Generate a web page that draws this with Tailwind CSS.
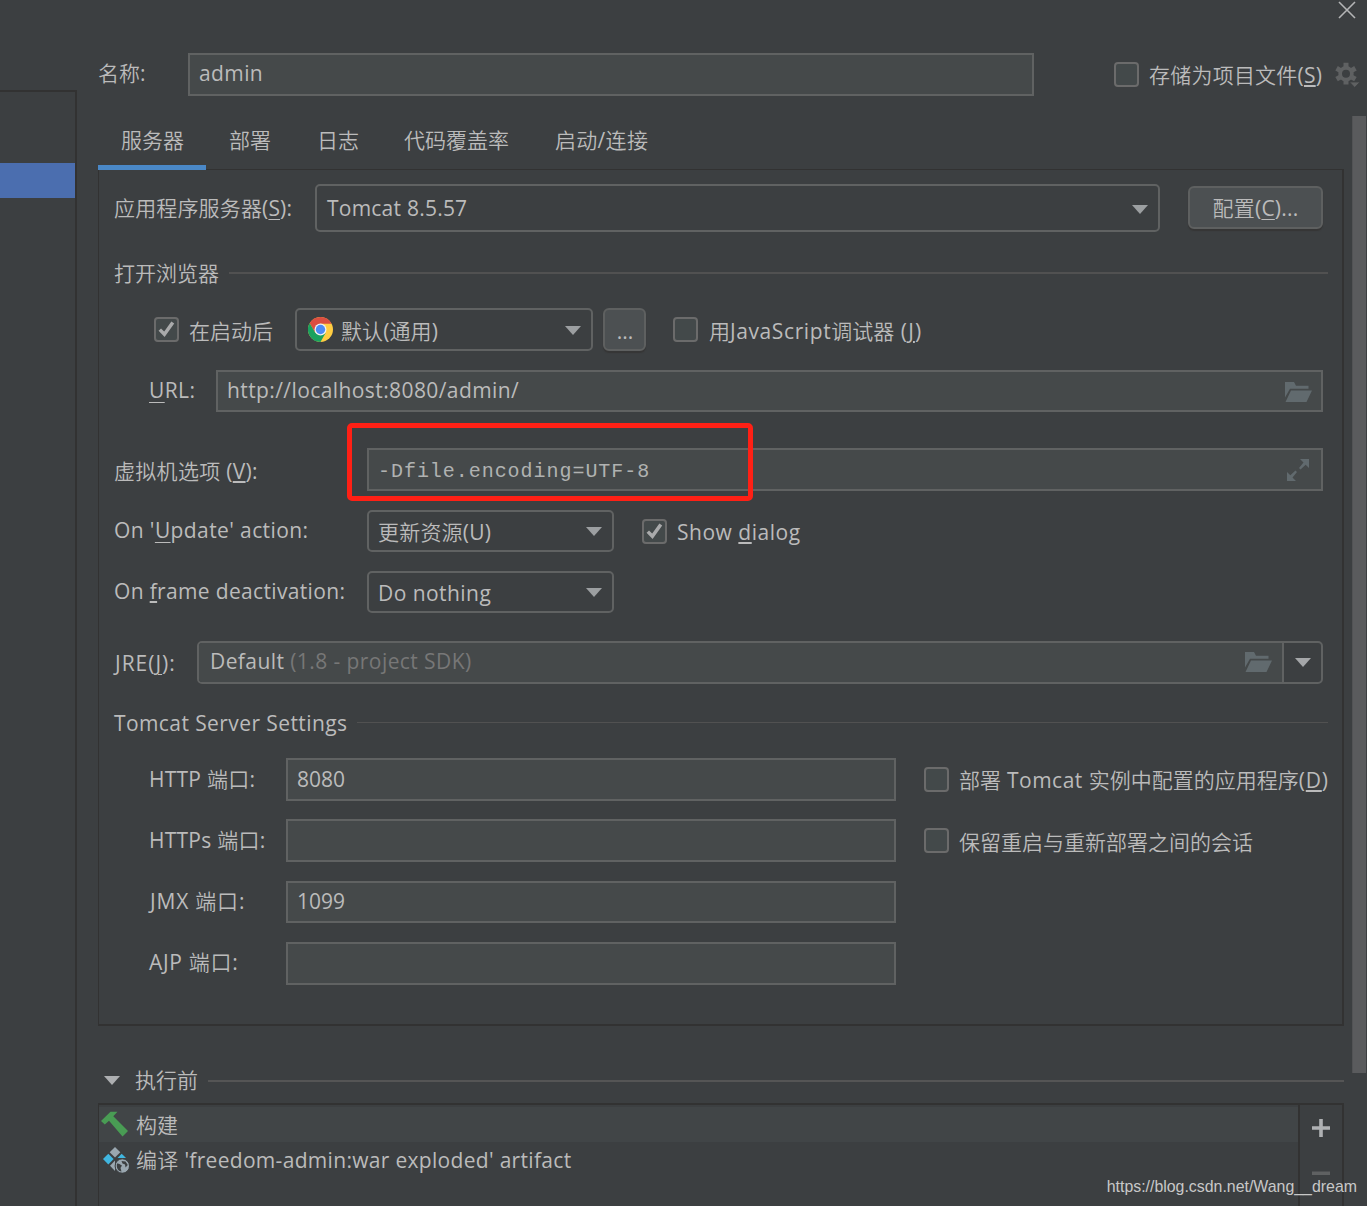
<!DOCTYPE html>
<html lang="zh-CN">
<head>
<meta charset="utf-8">
<title>Run/Debug Configurations</title>
<script src="https://cdn.jsdelivr.net/npm/@tailwindcss/browser@4"></script>
</head>
<body class="bg-[#3c3f41]">
<svg class="hidden">
  <symbol id="arrow" viewBox="0 0 16 9"><path d="M0 0H16L8 9Z" fill="currentColor"/></symbol>
  <symbol id="check" viewBox="0 0 25 25"><path d="M5.800 12.600L10.400 17.300L18.800 5.500" fill="none" stroke="#a9aaab" stroke-width="3.500"/></symbol>
  <symbol id="folder" viewBox="0 0 27 20"><path d="M0 0H9L11 3.700H23.500V6.700H5L0 15.500Z M6 8.600H27L21.500 20H.5Z" fill="#616a6e"/></symbol>
</svg>
<div class="relative flex h-[1206px] w-[1367px] overflow-hidden bg-[#3c3f41] font-['Open_Sans','Noto_Sans_CJK_SC_DemiLight','Noto_Sans_CJK_SC_Light','Noto_Sans_CJK_SC',sans-serif] text-[21px] leading-[28px] whitespace-nowrap text-[#bbbbbb]">

  <aside class="flex h-full w-[77px] shrink-0 flex-col pt-[90px]">
    <div class="flex-1 border-t-2 border-r-2 border-[#323232] pt-[71px]">
      <div class="h-[35px] bg-[#4b6eaf]"></div>
    </div>
  </aside>

  <main class="ml-[21px] flex w-[1269px] flex-col">
    <div class="flex h-[53px] justify-end pt-px pr-[11px]">
      <svg class="h-[18px] w-[18px]" viewBox="0 0 18 18"><path d="M1 1L17 17M17 1L1 17" stroke="#b4b5b6" stroke-width="1.6"/></svg>
    </div>

    <div class="flex h-[43px] items-center">
      <span class="w-[90px] pb-[4px]">名称:</span>
      <div class="flex h-[43px] w-[846px] items-center border-2 border-[#606262] bg-[#45494a] pb-[3px] pl-[9px] tracking-[.4px]">admin</div>
      <div class="ml-[80px] h-[25px] w-[25px] rounded-[4px] border-2 border-[#6b6b6b] bg-[#43494a]"></div>
      <span class="ml-[10px] w-[186px] pt-px tracking-[.22px]">存储为项目文件(<span class="underline decoration-2 underline-offset-[2px]">S</span>)</span>
      <svg class="h-[26px] w-[25px]" viewBox="0 0 25 26">
        <g fill="#5f6162">
          <path fill-rule="evenodd" d="M11 4A7.700 7.700 0 1 1 11 19.400A7.700 7.700 0 1 1 11 4ZM11 7.700A4 4 0 1 0 11 15.700A4 4 0 1 0 11 7.700Z"/>
          <path d="M8.500 .8H13.500V5H8.500ZM8.500 18.500H13.500V22.600H8.500Z"/>
          <path d="M8.500 .8H13.500V5H8.500ZM8.500 18.500H13.500V22.600H8.500Z" transform="rotate(60 11 11.700)"/>
          <path d="M8.500 .8H13.500V5H8.500ZM8.500 18.500H13.500V22.600H8.500Z" transform="rotate(120 11 11.700)"/>
          <path d="M14.500 20H25L19.700 25.500Z" stroke="#3c3f41" stroke-width=".8"/>
        </g>
      </svg>
    </div>

    <div class="flex flex-1">
      <div class="flex w-[1246px] flex-col">
        <nav class="relative flex h-[74px] shrink-0 pt-[30px]">
          <div class="z-10 flex h-[44px] w-[108px] justify-center border-b-5 border-[#4a88c7] pl-px">服务器</div>
          <span class="ml-[23px] w-[88px]">部署</span>
          <span class="w-[87px]">日志</span>
          <span class="w-[151px]">代码覆盖率</span>
          <span class="tracking-[.3px]">启动/连接</span>
        </nav>

        <section class="-mt-px flex h-[857px] shrink-0 flex-col border-t border-r-2 border-b-2 border-l border-[#323232] pt-[14px] pl-[15px]">
          <div class="flex h-[48px] items-center">
            <span class="w-[201px] tracking-[.15px]">应用程序服务器(<span class="underline decoration-1 underline-offset-[3px]">S</span>):</span>
            <div class="flex h-[48px] w-[845px] items-center justify-between rounded-[5px] border-2 border-[#606262] pr-[10px] pl-[10px]">
              <span class="tracking-[.23px]">Tomcat 8.5.57</span>
              <svg class="mt-[2px] h-[9px] w-[16px] text-[#9c9fa1]"><use href="#arrow"/></svg>
            </div>
            <div class="-mt-px ml-[28px] flex h-[43px] w-[135px] items-center justify-center rounded-[6px] border-2 border-[#5e6060] bg-[#4c5052] tracking-[.2px] shadow-[0_2px_1px_#363636]">配置(<span class="underline decoration-1 underline-offset-[3px]">C</span>)...</div>
          </div>

          <div class="mt-[28px] flex h-[28px] items-center gap-[10px]">
            <span class="pb-[2px]">打开浏览器</span>
            <div class="mr-[14px] mb-[2px] h-[2px] flex-1 bg-[#515151]"></div>
          </div>

          <div class="mt-[20px] flex h-[43px] items-center pl-[40px]">
            <svg class="h-[25px] w-[25px] rounded-[4px] bg-[#43494a] outline-2 -outline-offset-2 outline-[#6b6b6b]"><use href="#check"/></svg>
            <span class="ml-[10px] w-[106px] pt-[2px]">在启动后</span>
            <div class="flex h-[43px] w-[298px] items-center rounded-[5px] border-2 border-[#606262] pr-[10px] pl-[11px]">
              <svg class="h-[25px] w-[25px]" viewBox="0 0 48 48">
                <circle cx="24" cy="24" r="24" fill="#ffcd42"/>
                <path d="M24 13H45.300A24 24 0 0 0 3.200 12L14 30Z" fill="#db4e41"/>
                <path d="M3.200 12A24 24 0 0 0 24 48L34 30H14Z" fill="#1aa15f"/>
                <circle cx="24" cy="24" r="11.500" fill="#f1f1f1"/>
                <circle cx="24" cy="24" r="9" fill="#4c8bf5"/>
              </svg>
              <span class="ml-[8px] flex-1 pt-[3px] tracking-[.1px]">默认(通用)</span>
              <svg class="mt-px h-[9px] w-[16px] text-[#9c9fa1]"><use href="#arrow"/></svg>
            </div>
            <div class="ml-[10px] flex h-[43px] w-[43px] items-center justify-center rounded-[6px] border-2 border-[#5e6060] bg-[#4c5052] pt-[3px] pl-px shadow-[0_2px_1px_#363636]">...</div>
            <div class="ml-[27px] h-[25px] w-[25px] rounded-[4px] border-2 border-[#6b6b6b] bg-[#43494a]"></div>
            <span class="ml-[11px] pt-[2px]">用<span class="tracking-[.6px]">JavaScript</span>调试器<span class="tracking-[1.1px]"> (<span class="underline decoration-2 underline-offset-[2px]">J</span>)</span></span>
          </div>

          <div class="mt-[19px] flex h-[42px] items-center pl-[35px]">
            <span class="w-[67px] pb-[2px] tracking-[.4px]"><span class="underline decoration-1 underline-offset-[4px]">U</span>RL:</span>
            <div class="flex h-[42px] w-[1107px] items-center justify-between border-2 border-[#606262] bg-[#45494a] pr-[9px] pl-[9px]">
              <span class="pb-[2px] tracking-[.41px]">http://localhost:8080/admin/</span>
              <svg class="mt-[2px] h-[20px] w-[27px]"><use href="#folder"/></svg>
            </div>
          </div>

          <div class="mt-[36px] flex h-[43px] items-center">
            <span class="w-[253px] pt-[2px] tracking-[.3px]">虚拟机选项 (<span class="underline decoration-2 underline-offset-[2px]">V</span>):</span>
            <div class="flex h-[43px] w-[956px] items-center justify-between border-2 border-[#606262] bg-[#45494a] pr-[12px] pl-[9px]">
              <span class="pt-[4px] font-['Liberation_Mono',monospace] text-[20px] tracking-[.96px] text-[#b0b2b1]">-Dfile.encoding=UTF-8</span>
              <svg class="h-[22px] w-[22px]" viewBox="0 0 22 22"><path d="M13 0H22V9L18.700 5.700L13.500 10.600L12 9.100L16.500 3.500Z M0 22V13L3.300 16.300L8.500 11.400L10 12.900L5.500 18.500L9 22Z" fill="#616a6e"/></svg>
            </div>
          </div>

          <div class="mt-[19px] flex h-[42px] items-center">
            <span class="w-[253px] pb-[2px] tracking-[.4px]">On '<span class="underline decoration-1 underline-offset-[4px]">U</span>pdate' action:</span>
            <div class="flex h-[42px] w-[247px] items-center justify-between rounded-[5px] border-2 border-[#606262] pr-[10px] pl-[9px]">
              <span class="pt-[2px] tracking-[.2px]">更新资源(U)</span>
              <svg class="h-[9px] w-[16px] text-[#9c9fa1]"><use href="#arrow"/></svg>
            </div>
            <svg class="ml-[28px] h-[25px] w-[25px] rounded-[4px] bg-[#43494a] outline-2 -outline-offset-2 outline-[#6b6b6b]"><use href="#check"/></svg>
            <span class="ml-[10px] pt-[2px] tracking-[.52px]">Show <span class="underline decoration-2 underline-offset-[2px]">d</span>ialog</span>
          </div>

          <div class="mt-[19px] flex h-[42px] items-center">
            <span class="w-[253px] pb-[2px] tracking-[.34px]">On <span class="underline decoration-2 underline-offset-[2px]">f</span>rame deactivation:</span>
            <div class="flex h-[42px] w-[247px] items-center justify-between rounded-[5px] border-2 border-[#606262] pr-[10px] pl-[9px]">
              <span class="pt-[2px] tracking-[.45px]">Do nothing</span>
              <svg class="h-[9px] w-[16px] text-[#9c9fa1]"><use href="#arrow"/></svg>
            </div>
          </div>

          <div class="mt-[28px] flex h-[43px] items-center">
            <span class="w-[83px] pt-px pl-px tracking-[1px]">JRE(<span class="underline decoration-1 underline-offset-[3px]">J</span>):</span>
            <div class="flex h-[43px] w-[1126px] items-center rounded-[5px] border-2 border-[#606262]">
              <div class="flex h-full flex-1 items-center justify-between rounded-l-[3px] border-r-2 border-[#606262] bg-[#45494a] pr-[10px] pl-[11px]">
                <span class="pb-[4px] tracking-[.42px]">Default <span class="text-[#777777]">(1.8 - project SDK)</span></span>
                <svg class="mb-px h-[20px] w-[27px]"><use href="#folder"/></svg>
              </div>
              <div class="flex w-[37px] justify-center"><svg class="h-[9px] w-[16px] text-[#a5a7a9]"><use href="#arrow"/></svg></div>
            </div>
          </div>

          <div class="mt-[25px] flex h-[28px] items-center gap-[10px]">
            <span class="tracking-[.41px]">Tomcat Server Settings</span>
            <div class="mr-[14px] mb-px h-px flex-1 bg-[#515151]"></div>
          </div>

          <div class="mt-[21px] flex pl-[35px]">
            <div class="flex w-[137px] flex-col gap-[33px] pt-[7px]">
              <span class="tracking-[.25px]">HTTP 端口:</span><span class="tracking-[.25px]">HTTPs 端口:</span><span class="pl-px tracking-[.8px]">JMX 端口:</span><span class="tracking-[.7px]">AJP 端口:</span>
            </div>
            <div class="flex w-[610px] flex-col gap-[18.500px]">
              <div class="flex h-[42.800px] items-center border-2 border-[#606262] bg-[#45494a] pb-px pl-[9px]">8080</div>
              <div class="h-[42.800px] border-2 border-[#606262] bg-[#45494a]"></div>
              <div class="flex h-[42.800px] items-center border-2 border-[#606262] bg-[#45494a] pb-[2px] pl-[9px]">1099</div>
              <div class="h-[42.800px] border-2 border-[#606262] bg-[#45494a]"></div>
            </div>
            <div class="ml-[28px] flex flex-col gap-[33px] pt-[8px]">
              <div class="flex h-[28px] items-center gap-[10px]">
                <div class="mb-px h-[25px] w-[25px] rounded-[4px] border-2 border-[#6b6b6b] bg-[#43494a]"></div>
                <span>部署<span class="tracking-[.5px]"> Tomcat </span>实例中配置的应用程序<span class="tracking-[.8px]">(<span class="underline decoration-2 underline-offset-[2px]">D</span>)</span></span>
              </div>
              <div class="flex h-[28px] items-center gap-[10px]">
                <div class="mb-px h-[25px] w-[25px] rounded-[4px] border-2 border-[#6b6b6b] bg-[#43494a]"></div>
                <span class="pt-px">保留重启与重新部署之间的会话</span>
              </div>
            </div>
          </div>
        </section>

        <div class="mt-[41px] flex h-[28px] shrink-0 items-center pl-[6px]">
          <svg class="mb-[2px] h-[9px] w-[16px] text-[#adafb1]"><use href="#arrow"/></svg>
          <span class="mr-[10px] ml-[15px] pb-[2px]">执行前</span>
          <div class="h-[2px] flex-1 bg-[#555555]"></div>
        </div>

        <div class="mt-[8px] flex flex-1 border-t-2 border-r-2 border-l border-[#323232]">
          <div class="flex-1 border-r-2 border-[#323232] pt-[2px]">
            <div class="flex h-[35px] items-center bg-[#414547] pl-[2px]">
              <svg class="mb-px h-[26px] w-[27px]" viewBox="0 0 27 26"><path d="M0 10L9.500 .7H16.500L12.300 5.300L27 20L21.500 25.500L8 9.800L3.800 13.500Z" fill="#499c54"/></svg>
              <span class="ml-[8px]">构建</span>
            </div>
            <div class="flex h-[36px] items-center pl-[4px]">
              <svg class="h-[26px] w-[26px]" viewBox="0 0 26 26">
                <path d="M12 0L17.300 5.300L12 10.600L6.700 5.300Z" fill="#9aa7b0"/>
                <path d="M5.300 6.800L10.600 12.100L5.300 17.400L0 12.100Z" fill="#40b6e0"/>
                <path d="M18.700 6.800L23 11H14.500Z" fill="#40b6e0"/>
                <path d="M12 13.500L7 18.800L12 24Z" fill="#9aa7b0"/>
                <circle cx="19.300" cy="19" r="7.200" fill="#9aa7b0" stroke="#3c3f41"/>
                <path d="M14 16.500C16 16 17.500 18 19 18.500L17.500 21L18.500 24.500C15 24 13.200 21 14 16.500ZM18.500 14L22.500 14.500L24.800 18L22.500 20.500L22 17.500L19.500 16.500Z" fill="#3c3f41"/>
              </svg>
              <span class="ml-[7px] tracking-[.31px]">编译 'freedom-admin:war exploded' artifact</span>
            </div>
          </div>
          <div class="flex w-[42px] flex-col items-center pt-[14px]">
            <svg class="h-[60px] w-[18px]" viewBox="0 0 18 60"><path d="M7.200 0H10.800V7.200H18V10.800H10.800V18H7.200V10.800H0V7.200H7.200Z" fill="#afb1b3"/><path d="M0 52.500H18V56H0Z" fill="#5f6162"/></svg>
          </div>
        </div>
      </div>
      <div class="mt-[20px] ml-[8px] h-[957px] w-[14px] border-l border-[#525355] bg-[#5a5b5d]"></div>
    </div>
  </main>

  <div class="absolute top-[423px] left-[347px] h-[78px] w-[406px] rounded-[5px] border-5 border-[#ff2015]"></div>
  <div class="absolute top-[1176px] right-[10px] font-['Liberation_Sans',sans-serif] text-[15.900px] leading-[22px] text-[#c8c8c8]">https://blog.csdn.net/Wang__dream</div>
</div>
</body>
</html>
